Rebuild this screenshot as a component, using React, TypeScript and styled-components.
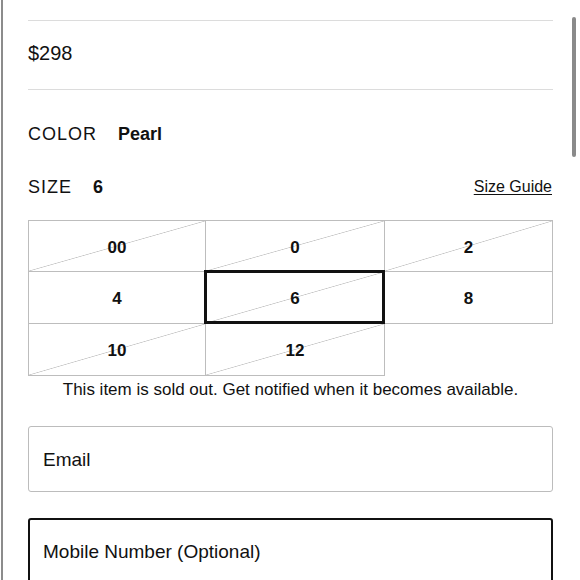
import React from "react";
import styled, { createGlobalStyle } from "styled-components";

const Global = createGlobalStyle`
  html, body { margin: 0; padding: 0; background: #fff; }
  body { font-family: "Liberation Sans", Arial, sans-serif; color: #111; overflow: hidden; }
  * { box-sizing: border-box; }
`;

const Page = styled.div`
  margin-left: 1px;
  border-left: 2px solid #8c8c8c;
  min-height: 580px;
  padding-left: 25px;
  padding-top: 20px;
`;

const Content = styled.div`
  width: 525px;
  display: flex;
  flex-direction: column;
`;

const Divider = styled.hr`
  margin: 0;
  border: none;
  height: 1px;
  background: #dcdcdc;
  width: 100%;
`;

const PriceRow = styled.div`
  height: 68px;
  padding-bottom: 4px;
  display: flex;
  align-items: center;
  font-size: 20px;
`;

const AttrRow = styled.div<{ $mt: number }>`
  margin-top: ${(p) => p.$mt}px;
  height: 24px;
  display: flex;
  align-items: center;
  justify-content: space-between;
`;

const AttrLeft = styled.div`
  display: flex;
  align-items: center;
  gap: 21px;
`;

const AttrLabel = styled.span`
  font-size: 18px;
  letter-spacing: 1px;
`;

const AttrValue = styled.span`
  font-size: 18px;
  font-weight: 700;
`;

const GuideLink = styled.a`
  font-size: 16px;
  color: #111;
  text-decoration: underline;
  text-underline-offset: 2px;
  margin-right: 1px;
`;

const Grid = styled.div`
  margin-top: 21px;
  display: grid;
  grid-template-columns: 178px 179px 168px;
  grid-auto-rows: auto;
`;

const Cell = styled.div<{ $soldOut: boolean; $selected: boolean; $col: number; $row: number }>`
  position: relative;
  display: flex;
  align-items: center;
  justify-content: center;
  padding-top: 3px;
  font-size: 17px;
  font-weight: 700;
  color: #111;
  border-right: 1px solid #bdbdbd;
  border-bottom: 1px solid #bdbdbd;
  border-left: ${(p) => (p.$col === 0 ? "1px solid #bdbdbd" : "none")};
  border-top: ${(p) => (p.$row === 0 ? "1px solid #bdbdbd" : "none")};
  height: 52px;
  background: ${(p) =>
    p.$soldOut
      ? "linear-gradient(to bottom right, transparent calc(50% - 0.7px), #c6c6c6 50%, transparent calc(50% + 0.7px))"
      : "none"};
  ${(p) =>
    p.$selected
      ? `
    z-index: 1;
    &::after {
      content: "";
      position: absolute;
      top: -2px;
      left: -2px;
      right: -1px;
      bottom: -1px;
      border: 3px solid #111;
    }
  `
      : ""}
`;

const Note = styled.p`
  margin: 0;
  padding-top: 3px;
  text-align: center;
  font-size: 17px;
  line-height: 22px;
`;

const Field = styled.input<{ $focused?: boolean; $mt: number }>`
  margin-top: ${(p) => p.$mt}px;
  width: 100%;
  height: 66px;
  border: ${(p) => (p.$focused ? "2px solid #111" : "1px solid #bcbcbc")};
  border-radius: 3px;
  padding: 2px ${(p) => (p.$focused ? "13px" : "14px")} 0;
  font-family: "Liberation Sans", Arial, sans-serif;
  font-size: 19px;
  color: #111;
  outline: none;
  background: #fff;
  &::placeholder { color: #111; opacity: 1; }
`;

const Scrollbar = styled.div`
  position: fixed;
  right: 4px;
  top: 17px;
  width: 4px;
  height: 140px;
  border-radius: 2px;
  background: #8a8a8a;
`;

const sizes = [
  { label: "00", soldOut: true },
  { label: "0", soldOut: true },
  { label: "2", soldOut: true },
  { label: "4", soldOut: false },
  { label: "6", soldOut: true },
  { label: "8", soldOut: false },
  { label: "10", soldOut: true },
  { label: "12", soldOut: true },
];

export default function App() {
  return (
    <>
      <Global />
      <Page>
        <Content>
          <Divider />
          <PriceRow>$298</PriceRow>
          <Divider />
          <AttrRow $mt={32}>
            <AttrLeft>
              <AttrLabel>COLOR</AttrLabel>
              <AttrValue>Pearl</AttrValue>
            </AttrLeft>
          </AttrRow>
          <AttrRow $mt={29}>
            <AttrLeft>
              <AttrLabel>SIZE</AttrLabel>
              <AttrValue>6</AttrValue>
            </AttrLeft>
            <GuideLink href="#">Size Guide</GuideLink>
          </AttrRow>
          <Grid>
            {sizes.map((s, i) => (
              <Cell
                key={s.label}
                $soldOut={s.soldOut}
                $selected={s.label === "6"}
                $col={i % 3}
                $row={Math.floor(i / 3)}
              >
                {s.label}
              </Cell>
            ))}
          </Grid>
          <Note>This item is sold out. Get notified when it becomes available.</Note>
          <Field $mt={25} placeholder="Email" />
          <Field $mt={26} $focused placeholder="Mobile Number (Optional)" />
        </Content>
      </Page>
      <Scrollbar />
    </>
  );
}
